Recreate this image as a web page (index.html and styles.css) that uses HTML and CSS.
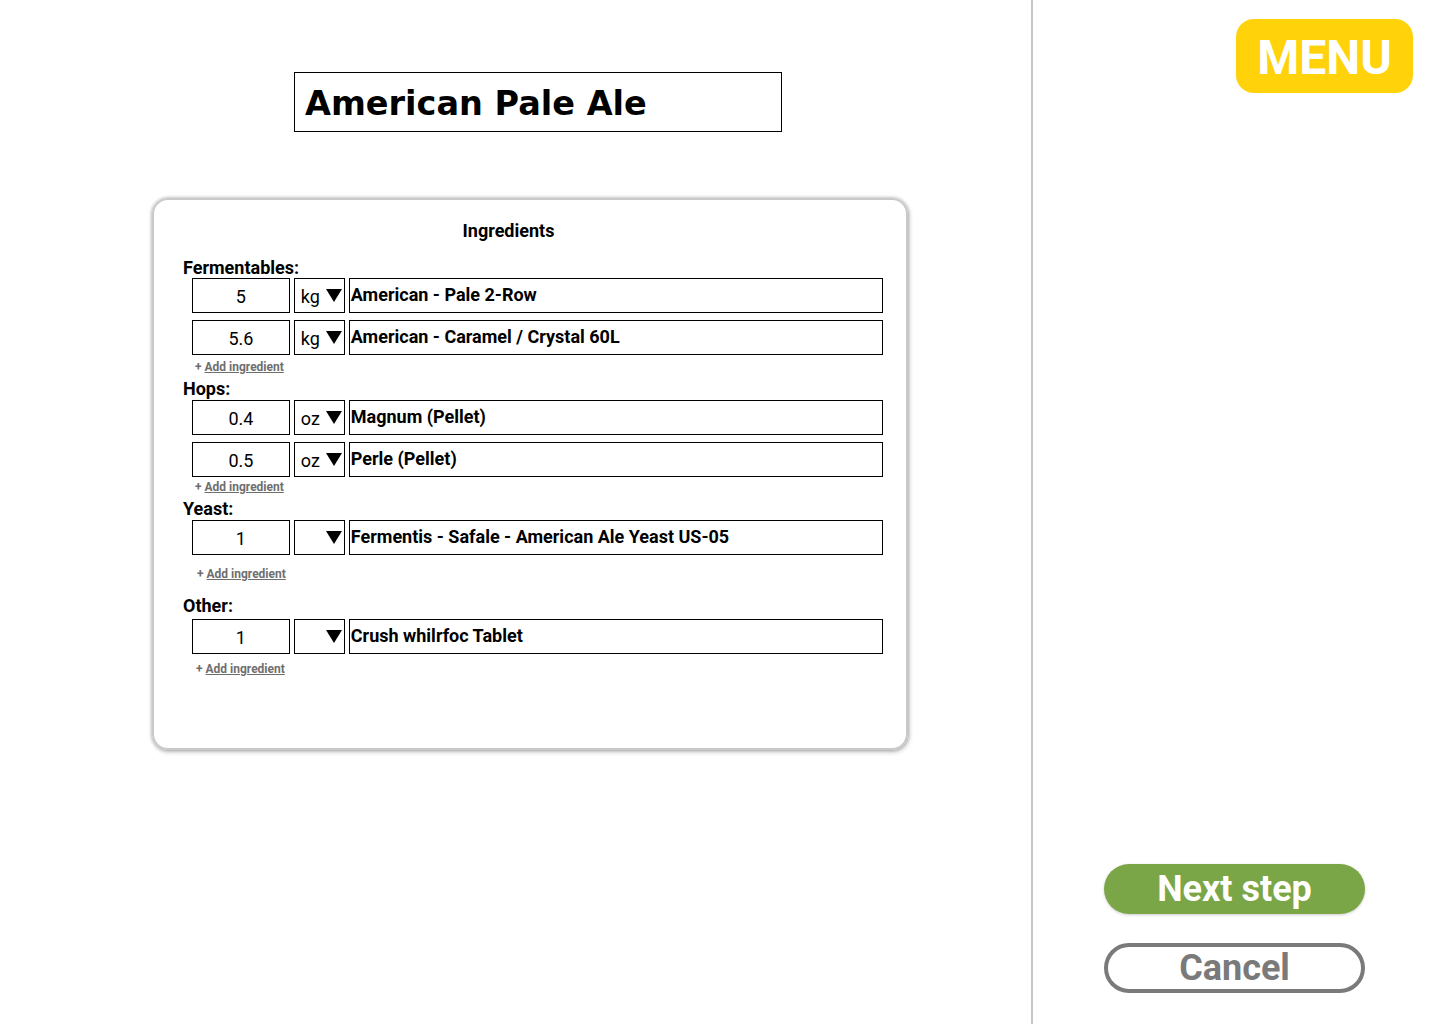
FILE: index.html
```html
<!DOCTYPE html>
<html>
<head>
<meta charset="utf-8">
<link rel="stylesheet" href="styles.css">
</head>
<body>
<div class="page">
  <main class="main">
    <div class="title-box"><h1 class="title">American Pale Ale</h1></div>
    <section class="card">
      <h2 class="card-title">Ingredients</h2>

      <div class="group-label g-ferm">Fermentables:</div>
      <div class="rows">
        <div class="row"><div class="qty">5</div><div class="unit"><span class="u">kg</span><span class="tri"></span></div><div class="name">American - Pale 2-Row</div></div>
        <div class="row"><div class="qty">5.6</div><div class="unit"><span class="u">kg</span><span class="tri"></span></div><div class="name">American - Caramel / Crystal 60L</div></div>
      </div>
      <div class="add add-a">+ <a href="#">Add ingredient</a></div>

      <div class="group-label g-hops">Hops:</div>
      <div class="rows">
        <div class="row"><div class="qty">0.4</div><div class="unit"><span class="u">oz</span><span class="tri"></span></div><div class="name">Magnum (Pellet)</div></div>
        <div class="row"><div class="qty">0.5</div><div class="unit"><span class="u">oz</span><span class="tri"></span></div><div class="name">Perle (Pellet)</div></div>
      </div>
      <div class="add add-h">+ <a href="#">Add ingredient</a></div>

      <div class="group-label g-yeast">Yeast:</div>
      <div class="rows">
        <div class="row"><div class="qty">1</div><div class="unit"><span class="u"></span><span class="tri"></span></div><div class="name">Fermentis - Safale - American Ale Yeast US-05</div></div>
      </div>
      <div class="add add-b">+ <a href="#">Add ingredient</a></div>

      <div class="group-label g-other">Other:</div>
      <div class="rows rows-other">
        <div class="row"><div class="qty">1</div><div class="unit"><span class="u"></span><span class="tri"></span></div><div class="name">Crush whilrfoc Tablet</div></div>
      </div>
      <div class="add add-c">+ <a href="#">Add ingredient</a></div>
    </section>
  </main>
  <aside class="side">
    <div class="menu-wrap"><button class="menu">MENU</button></div>
    <div class="actions">
      <button class="btn next">Next step</button>
      <button class="btn cancel">Cancel</button>
    </div>
  </aside>
</div>
</body>
</html>
```

FILE: styles.css
```css
* { box-sizing: border-box; }
html, body { margin: 0; padding: 0; background: #fff; }
body { font-family: Roboto, "Liberation Sans", Arial, sans-serif; color: #000; }

.page { display: flex; width: 1440px; height: 1024px; }

.main {
  width: 1033px;
  border-right: 2px solid #c6c6c6;
  padding-top: 72px;
}

.title-box {
  margin-left: 294px;
  width: 488px;
  height: 60px;
  border: 1px solid #000;
  display: flex;
  align-items: center;
  padding-left: 10px;
}
.title {
  margin: 0;
  font-family: "DejaVu Sans", Montserrat, sans-serif;
  font-weight: 700;
  font-size: 33.5px;
  line-height: 1;
  padding-top: 4px;
}

.card {
  margin-top: 66px;
  margin-left: 152px;
  width: 756px;
  height: 552px;
  border-radius: 16px;
  border: 2px solid #c9c9c9;
  box-shadow: 0 0 3px 1px rgba(0,0,0,0.18), 1px 2px 5px rgba(0,0,0,0.22);
  padding: 21px 23px 0 29px;
}

.card-title {
  margin: 0;
  text-align: center;
  font-size: 18px;
  font-weight: 700;
  line-height: 20px;
  padding-right: 49px;
}

.group-label {
  font-size: 18px;
  font-weight: 700;
  line-height: 18px;
}
.g-ferm { margin-top: 18px; }
.g-hops { margin-top: 7px; }
.g-yeast { margin-top: 7px; }
.g-other { margin-top: 17px; }

.rows {
  display: flex;
  flex-direction: column;
  gap: 7px;
  margin-top: 1px;
  padding-left: 9px;
}
.g-hops + .rows { margin-top: 2px; }
.g-yeast + .rows { margin-top: 2px; }
.rows-other { margin-top: 4px; }

.row { display: flex; gap: 4px; height: 35px; }
.qty, .unit, .name {
  border: 1px solid #000;
  height: 35px;
  font-size: 18px;
  display: flex;
  align-items: center;
}
.qty { width: 98px; justify-content: center; padding-top: 2px; }
.unit { width: 51px; padding-left: 6px; padding-top: 2px; }
.unit .u { width: 25px; }
.tri {
  width: 0; height: 0;
  border-left: 8px solid transparent;
  border-right: 8px solid transparent;
  border-top: 13px solid #000;
  margin-top: -2px;
}
.name {
  width: 535px;
  font-weight: 700;
  padding-left: 1px;
  padding-bottom: 2px;
  font-size: 18px;
}

.add {
  font-size: 12px;
  font-weight: 700;
  color: #6e6e6e;
  line-height: 12px;
  padding-left: 12px;
}
.add a { color: #6e6e6e; text-decoration: underline; }
.add-a { margin-top: 6px; }
.add-h { margin-top: 4px; }
.add-b { margin-top: 13px; padding-left: 14px; }
.add-c { margin-top: 9px; padding-left: 13px; }

.side {
  flex: 1;
  display: flex;
  flex-direction: column;
  padding-top: 19px;
  padding-right: 27px;
}
.menu-wrap { display: flex; justify-content: flex-end; }
.menu {
  width: 177px;
  height: 74px;
  border: none;
  border-radius: 18px;
  background: #ffd20a;
  color: #fff;
  font-family: Roboto, sans-serif;
  font-weight: 700;
  font-size: 48px;
  padding: 0;
  padding-top: 2px;
}

.actions {
  margin-top: 771px;
  margin-left: 71px;
  display: flex;
  flex-direction: column;
  gap: 29px;
}
.btn {
  width: 261px;
  height: 50px;
  border-radius: 25px;
  font-family: Roboto, sans-serif;
  font-weight: 700;
  font-size: 36px;
  padding: 0;
  line-height: 1;
}
.next {
  background: #7ba647;
  color: #fff;
  border: none;
  box-shadow: 0 1px 3px rgba(0,0,0,0.2);
}
.cancel {
  background: #fff;
  color: #7a7a7a;
  border: 4px solid #7a7a7a;
}
```
